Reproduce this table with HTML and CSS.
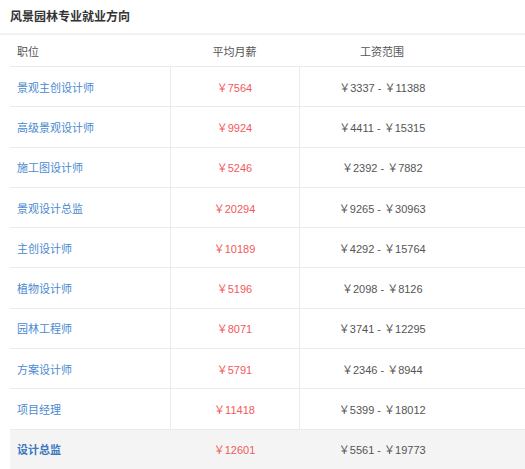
FILE: index.html
```html
<!DOCTYPE html>
<html lang="zh-CN">
<head>
<meta charset="utf-8">
<title>风景园林专业就业方向</title>
<link rel="stylesheet" href="styles.css">
</head>
<body>
<div class="panel">
  <h2 class="title">风景园林专业就业方向</h2>
  <table class="jobs">
    <colgroup>
      <col class="c-name"><col class="c-avg"><col class="c-range"><col class="c-pad">
    </colgroup>
    <thead>
      <tr><th class="name">职位</th><th>平均月薪</th><th>工资范围</th><th class="pad"></th></tr>
    </thead>
    <tbody>
      <tr><td class="name"><a>景观主创设计师</a></td><td class="avg">￥7564</td><td class="range">￥3337 - ￥11388</td><td class="pad"></td></tr>
      <tr><td class="name"><a>高级景观设计师</a></td><td class="avg">￥9924</td><td class="range">￥4411 - ￥15315</td><td class="pad"></td></tr>
      <tr><td class="name"><a>施工图设计师</a></td><td class="avg">￥5246</td><td class="range">￥2392 - ￥7882</td><td class="pad"></td></tr>
      <tr><td class="name"><a>景观设计总监</a></td><td class="avg">￥20294</td><td class="range">￥9265 - ￥30963</td><td class="pad"></td></tr>
      <tr><td class="name"><a>主创设计师</a></td><td class="avg">￥10189</td><td class="range">￥4292 - ￥15764</td><td class="pad"></td></tr>
      <tr><td class="name"><a>植物设计师</a></td><td class="avg">￥5196</td><td class="range">￥2098 - ￥8126</td><td class="pad"></td></tr>
      <tr><td class="name"><a>园林工程师</a></td><td class="avg">￥8071</td><td class="range">￥3741 - ￥12295</td><td class="pad"></td></tr>
      <tr><td class="name"><a>方案设计师</a></td><td class="avg">￥5791</td><td class="range">￥2346 - ￥8944</td><td class="pad"></td></tr>
      <tr><td class="name"><a>项目经理</a></td><td class="avg">￥11418</td><td class="range">￥5399 - ￥18012</td><td class="pad"></td></tr>
      <tr class="hover"><td class="name"><a>设计总监</a></td><td class="avg">￥12601</td><td class="range">￥5561 - ￥19773</td><td class="pad"></td></tr>
    </tbody>
  </table>
</div>
</body>
</html>
```
FILE: styles.css
```css
html, body {
  margin: 0;
  padding: 0;
  background: #fff;
  overflow: hidden;
}
body {
  font-family: "Liberation Sans", "Noto Sans CJK SC", sans-serif;
  color: #555;
}
.panel {
  width: 525px;
}
.title {
  margin: 0;
  height: 33px;
  line-height: 34px;
  padding-left: 10px;
  font-size: 12px;
  font-weight: bold;
  color: #333;
  border-bottom: 2px solid #f2f2f2;
}
.jobs {
  margin-left: 10px;
  width: 515px;
  border-collapse: collapse;
  table-layout: fixed;
  font-size: 11px;
}
.c-name { width: 160px; }
.c-avg { width: 129px; }
.c-range { width: 166px; }
.c-pad { width: 60px; }
.jobs th {
  height: 31px;
  font-weight: normal;
  color: #555;
  text-align: center;
  padding: 0;
  border-bottom: 1px solid #ebebeb;
}
.jobs th.name, .jobs td.name {
  text-align: left;
  padding-left: 7px;
}
.jobs td {
  height: 39.3px;
  padding: 0;
  text-align: center;
  border-bottom: 1px solid #ebebeb;
}
.jobs td.name, .jobs td.avg {
  border-right: 1px solid #ebebeb;
}
.jobs td.name a {
  color: #4a8ad0;
}
.jobs td.avg {
  color: #f25a5a;
}
.jobs td.range {
  color: #555;
}
.jobs tr.hover td {
  background: #f4f4f4;
  border-right-color: #f4f4f4;
}
.jobs tr.hover td.name a {
  font-weight: bold;
  color: #3a78c0;
}
```
